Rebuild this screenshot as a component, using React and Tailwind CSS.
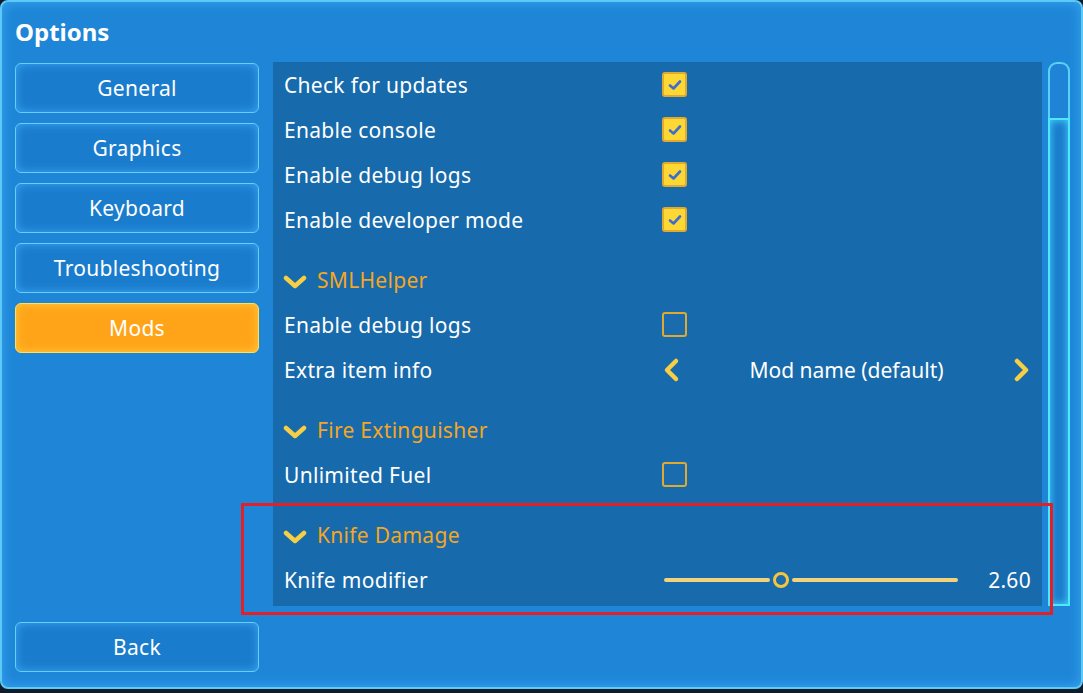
import React from "react";

const font = { fontFamily: '"Noto Sans", "Open Sans", sans-serif' };

const tabs = ["General", "Graphics", "Keyboard", "Troubleshooting", "Mods"];

const ChevronDown = () => (
  <svg width="24" height="14" viewBox="0 0 24 14" className="mr-[10px] mt-[4px]">
    <path d="M3 3 L12 11 L21 3" fill="none" stroke="#f7cf45" strokeWidth="4.5" strokeLinecap="round" strokeLinejoin="round" />
  </svg>
);

const Arrow = ({ dir }) => (
  <svg width="20" height="26" viewBox="0 0 20 26">
    <path
      d={dir === "left" ? "M14 4 L5 13 L14 22" : "M6 4 L15 13 L6 22"}
      fill="none"
      stroke="#f7cf45"
      strokeWidth="4.5"
      strokeLinecap="round"
      strokeLinejoin="round"
    />
  </svg>
);

const Checkbox = ({ checked }) =>
  checked ? (
    <div className="w-[25px] h-[25px] rounded-[3px] bg-[#fdd835] border-2 border-[#e0a930] flex items-center justify-center">
      <svg width="14" height="12" viewBox="0 0 14 12">
        <path d="M2 6.5 L5.5 9.5 L12 2.5" fill="none" stroke="#3f6dcc" strokeWidth="2.6" strokeLinecap="round" strokeLinejoin="round" />
      </svg>
    </div>
  ) : (
    <div className="w-[25px] h-[25px] rounded-[3px] border-2 border-[#e0a930] bg-[#1a6cae]" />
  );

const Row = ({ label, children }) => (
  <div className="h-[45px] flex items-center pl-[11px] pr-[11px]">
    <div className="w-[378px] shrink-0 pt-[2px] text-[21px] tracking-[0.3px] text-white">{label}</div>
    <div className="flex-1 flex items-center">{children}</div>
  </div>
);

const Header = ({ title }) => (
  <div className="h-[44px] mt-[16px] flex items-center pl-[10px]">
    <ChevronDown />
    <span className="pt-[2px] text-[21px] tracking-[0.3px] text-[#f5a623]">{title}</span>
  </div>
);

const App = () => {
  return (
    <div style={font} className="w-[1083px] h-[693px] bg-[#0e1c28] relative overflow-hidden">
      <div className="h-[689px] rounded-[8px] border-2 border-[#5cc9f6] bg-[#1f86d7] shadow-[inset_0_0_12px_#3aa6f0] flex flex-col pl-[13px] pr-[11px]">
        <div className="h-[60px] flex items-center">
          <h1 className="text-[24px] font-bold text-white">Options</h1>
        </div>
        <div className="flex flex-1 pb-[15px]">
          <div className="w-[244px] shrink-0 flex flex-col justify-between pt-px">
            <div className="flex flex-col gap-[10px]">
              {tabs.map((t) => (
                <button
                  key={t}
                  className={`h-[50px] rounded-[6px] pt-[2px] text-[21px] tracking-[0.3px] text-white border ${
                    t === "Mods"
                      ? "bg-[#ffa419] border-[#ffe15a] shadow-[inset_0_0_10px_#ffc93b]"
                      : "bg-[#1a7ccd] border-[#63d0fc] shadow-[inset_0_0_10px_#3ca6f2]"
                  }`}
                >
                  {t}
                </button>
              ))}
            </div>
            <button className="h-[50px] rounded-[6px] pt-[2px] text-[21px] tracking-[0.3px] text-white border bg-[#1a7ccd] border-[#63d0fc] shadow-[inset_0_0_10px_#3ca6f2]">
              Back
            </button>
          </div>
          <div className="flex ml-[14px] h-[544px] shrink-0">
            <div className="w-[769px] bg-[#176aab] flex flex-col">
              <Row label="Check for updates"><Checkbox checked /></Row>
              <Row label="Enable console"><Checkbox checked /></Row>
              <Row label="Enable debug logs"><Checkbox checked /></Row>
              <Row label="Enable developer mode"><Checkbox checked /></Row>
              <Header title="SMLHelper" />
              <Row label="Enable debug logs"><Checkbox /></Row>
              <Row label="Extra item info">
                <div className="flex-1 flex items-center justify-between">
                  <Arrow dir="left" />
                  <span className="pt-[2px] text-[21px] text-white">Mod name (default)</span>
                  <Arrow dir="right" />
                </div>
              </Row>
              <Header title="Fire Extinguisher" />
              <Row label="Unlimited Fuel"><Checkbox /></Row>
              <Header title="Knife Damage" />
              <Row label="Knife modifier">
                <div className="flex-1 flex items-center">
                  <div className="ml-[2px] w-[106px] h-[4px] rounded-full bg-[#f2d37c]" />
                  <div className="mx-[3px] w-[16px] h-[16px] rounded-full border-[3px] border-[#f5c53e] bg-[#1a6cae]" />
                  <div className="w-[166px] h-[4px] rounded-full bg-[#f2d37c]" />
                  <span className="ml-auto pt-[2px] text-[21px] tracking-[0.3px] text-white">2.60</span>
                </div>
              </Row>
            </div>
            <div className="ml-[6px] w-[22px] flex flex-col">
              <div className="h-[56px] rounded-t-[9px] border-2 border-b-0 border-[#5ad2f7] bg-[#1f84d5]" />
              <div className="flex-1 border-2 border-[#4fe6ff] bg-[#1a7bcc] shadow-[inset_0_0_8px_#4ad9ff]" />
            </div>
          </div>
        </div>
      </div>
      <div className="absolute left-[241px] top-[503px] w-[812px] h-[112px] border-[3px] border-[#e32027]" />
    </div>
  );
};

export default App;
